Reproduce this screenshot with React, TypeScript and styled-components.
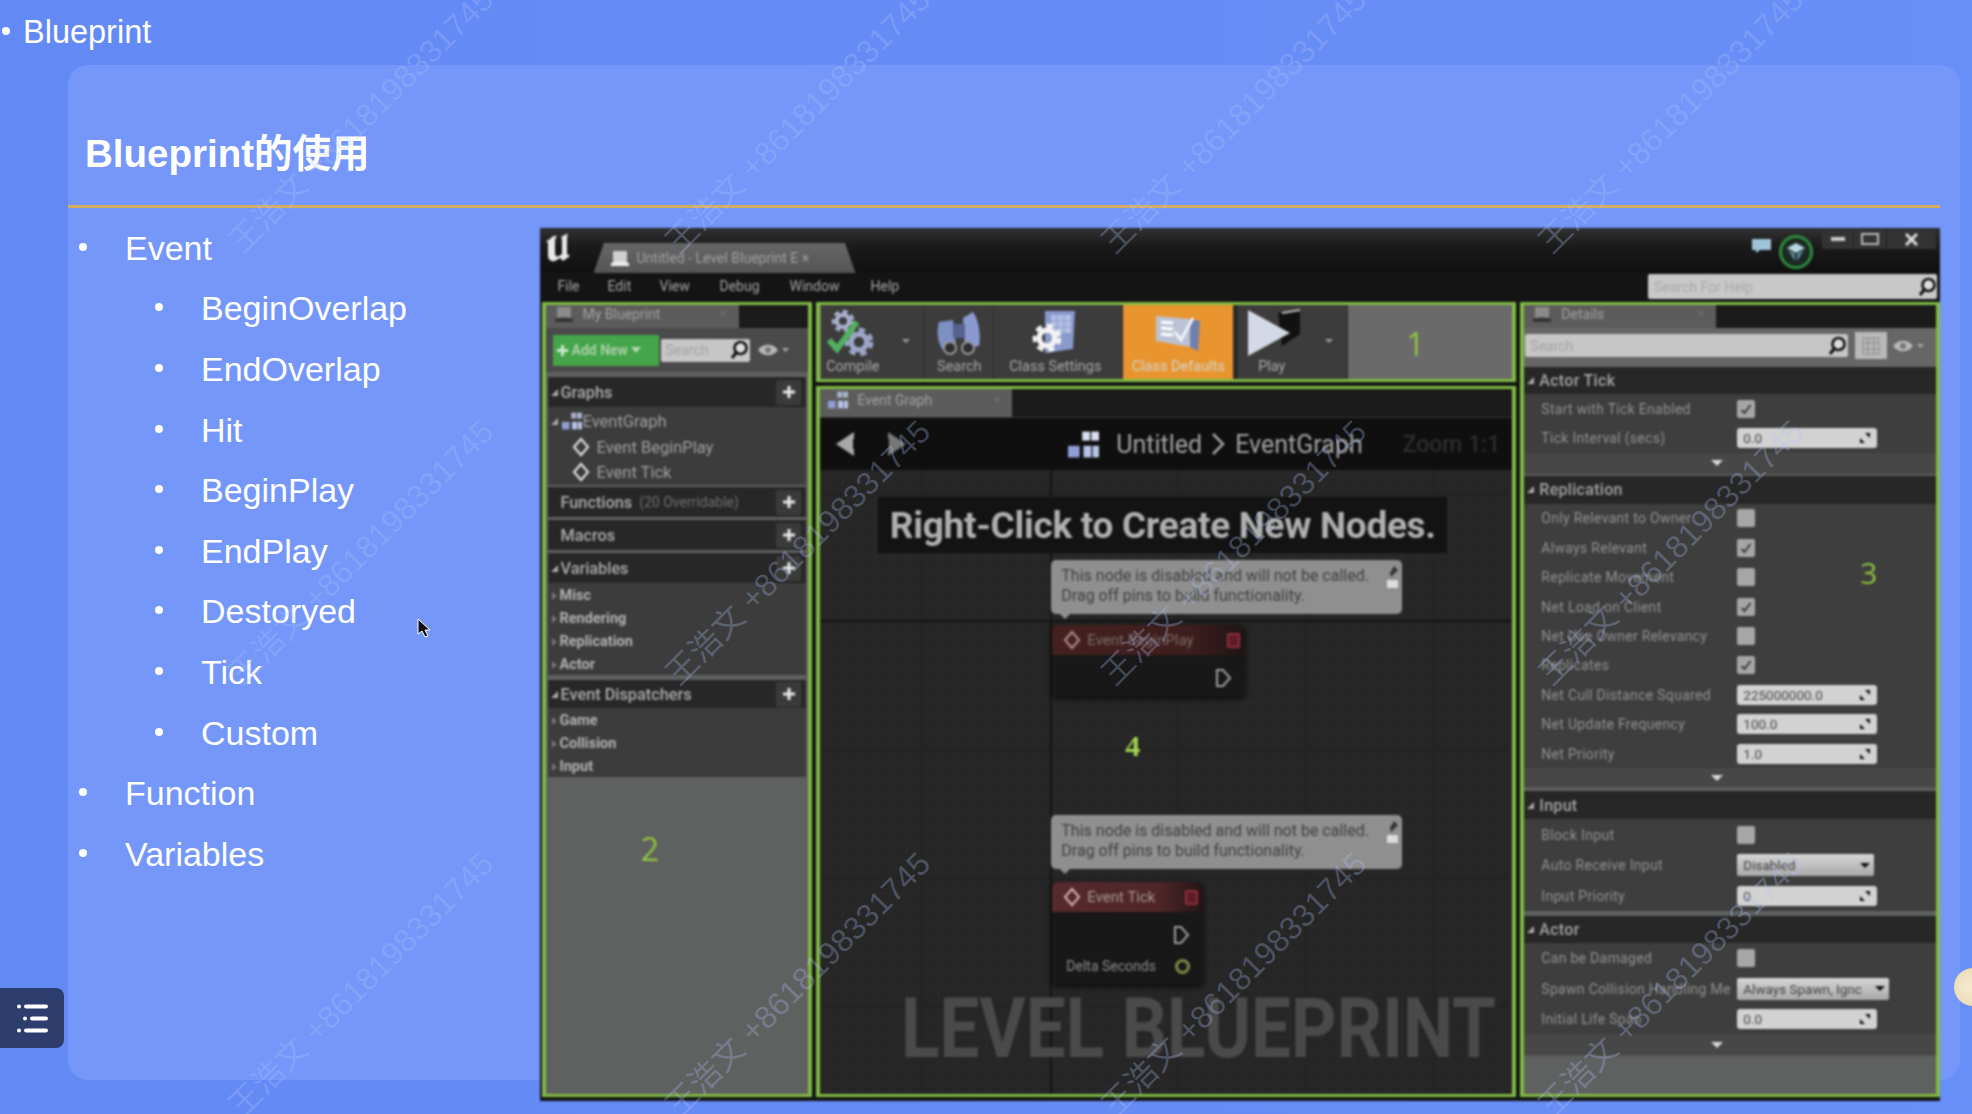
import React from "react";
import styled, { createGlobalStyle } from "styled-components";

const Global = createGlobalStyle`
  html, body { margin: 0; padding: 0; background: #668cf6; }
  * { box-sizing: border-box; }
`;

const SANS = `"Liberation Sans", "Noto Sans CJK SC", Arial, sans-serif`;
const UI = `Roboto, "Liberation Sans", sans-serif`;
const GREEN = "#80bb44";

const Page = styled.div`
  position: relative;
  width: 1972px;
  height: 1114px;
  overflow: hidden;
  background: linear-gradient(90deg, #6389f5 0%, #688ef7 100%);
  font-family: ${SANS};
  color: #fff;
`;
const TopBar = styled.div`
  height: 65px;
  display: flex;
  align-items: flex-start;
  padding: 13px 0 0 2px;
  font-size: 32.5px;
  line-height: 38px;
`;
const TopDot = styled.span`
  width: 8px;
  height: 8px;
  border-radius: 50%;
  background: #fff;
  margin: 14px 13px 0 0;
`;
const Slide = styled.section`
  margin-left: 68px;
  width: 1892px;
  height: 1015px;
  border-radius: 20px;
  background: #7497f9;
`;
const TitleRow = styled.h1`
  margin: 0 20px 0 0;
  height: 143px;
  border-bottom: 3px solid #d2ae63;
  padding: 67px 0 0 17px;
  font-size: 38.5px;
  line-height: 44px;
  font-weight: 700;
`;
const Content = styled.div`
  display: flex;
  align-items: flex-start;
`;
const Outline = styled.ul`
  list-style: none;
  margin: 0;
  padding: 10px 0 0;
  width: 471.5px;
`;
const Item = styled.li<{ $sub?: boolean }>`
  display: flex;
  align-items: center;
  height: 60.6px;
  padding-left: ${(p) => (p.$sub ? 87 : 11)}px;
  font-size: 34px;
`;
const Dot = styled.span`
  width: 8px;
  height: 8px;
  border-radius: 50%;
  background: #fff;
  margin: -3px 38px 0 0;
  flex: none;
`;

/* ---------- editor window ---------- */
const EditorWindow = styled.div`
  margin-top: 20px;
  width: 1400.5px;
  height: 873px;
  background: #141414;
  display: flex;
  flex-direction: column;
  font-family: ${UI};
  filter: blur(0.8px);
  border-top: 1px solid #222;
`;
const TitleBar = styled.div`
  height: 44px;
  flex: none;
  display: flex;
  align-items: flex-end;
  background: linear-gradient(180deg, #303030 0%, #1a1a1a 40%, #101010 100%);
  padding-left: 7px;
`;
const LogoMark = styled.svg`
  width: 28px;
  height: 30px;
  margin: 0 19px 10px 0;
  flex: none;
`;
const DocTab = styled.div`
  width: 262px;
  height: 30px;
  background: linear-gradient(180deg, #666 0%, #555 100%);
  clip-path: polygon(4% 0, 96% 0, 100% 100%, 0 100%);
  display: flex;
  align-items: center;
  padding-left: 16px;
  gap: 7px;
  color: #a0a0a0;
  font-size: 14px;
  white-space: nowrap;
`;
const TitleRight = styled.div`
  margin-left: auto;
  align-self: stretch;
  display: flex;
  align-items: flex-start;
  padding-right: 3px;
`;
const Ring = styled.div`
  width: 34px;
  height: 34px;
  margin: 6px 9px 0 6px;
  border-radius: 50%;
  border: 3px solid #2f8a3e;
  background: #1b2a22;
  display: flex;
  align-items: center;
  justify-content: center;
`;
const WinButtons = styled.div`
  display: flex;
  height: 20px;
  width: 115px;
  background: #333;
  border-radius: 0 0 2px 2px;
`;
const WinButton = styled.div<{ $w: number }>`
  width: ${(p) => p.$w}px;
  display: flex;
  align-items: center;
  justify-content: center;
  border-right: 1px solid #222;
`;
const MenuBar = styled.div`
  height: 29px;
  flex: none;
  display: flex;
  align-items: center;
  background: #141414;
  padding: 0 0 3px 18px;
  color: #a6a6a6;
  font-size: 14px;
`;
const MenuItem = styled.span<{ $w: number }>`
  width: ${(p) => p.$w}px;
`;
const HelpSearch = styled.div`
  margin-left: auto;
  margin-right: 3px;
  width: 289px;
  height: 25px;
  margin-top: 1px;
  background: #c8c8c8;
  color: #aaa;
  font-size: 14px;
  padding-left: 6px;
  display: flex;
  align-items: center;
  justify-content: space-between;
  border-radius: 2px;
`;
const Docks = styled.div`
  flex: 1;
  min-height: 0;
  display: flex;
  gap: 4px;
  padding: 0 0 4px 2px;
`;
const Dock = styled.div<{ $w: number; $grow?: boolean }>`
  width: ${(p) => p.$w}px;
  ${(p) => (p.$grow ? "flex: 1; min-height: 0;" : "")}
  border: solid ${GREEN};
  border-width: 3px 4px;
  background: #5f6060;
  display: flex;
  flex-direction: column;
  position: relative;
`;
const MiddleColumn = styled.div`
  width: 700px;
  display: flex;
  flex-direction: column;
  gap: 4px;
`;
const TabRow = styled.div<{ $h: number }>`
  height: ${(p) => p.$h}px;
  flex: none;
  background: #1b1b1b;
  display: flex;
`;
const PanelTab = styled.div<{ $w: number; $lift?: boolean }>`
  width: ${(p) => p.$w}px;
  background: #5c5c5c;
  color: #a2a2a2;
  font-size: 14px;
  display: flex;
  align-items: center;
  padding: 0 12px ${(p) => (p.$lift ? 6 : 2)}px 8px;
  gap: 9px;
`;
const TabClose = styled.span`
  margin-left: auto;
  color: #707070;
  font-size: 12px;
`;
const PanelToolbar = styled.div<{ $h: number; $bg: string; $lift?: number }>`
  height: ${(p) => p.$h}px;
  flex: none;
  background: ${(p) => p.$bg};
  display: flex;
  align-items: center;
  padding: 0 0 ${(p) => p.$lift ?? 0}px 1px;
`;
const AddNew = styled.div`
  width: 106px;
  height: 31px;
  margin-left: 6px;
  background: #45a54a;
  color: #a9cfa9;
  font-size: 14px;
  font-weight: 700;
  display: flex;
  align-items: center;
  padding-left: 3px;
  gap: 3px;
  white-space: nowrap;
`;
const SearchBox = styled.div<{ $w: number; $h: number; $ml: number }>`
  width: ${(p) => p.$w}px;
  height: ${(p) => p.$h}px;
  margin-left: ${(p) => p.$ml}px;
  background: #c6c6c6;
  color: #a3a3a3;
  font-size: 14px;
  display: flex;
  align-items: center;
  justify-content: space-between;
  padding: 0 1px 0 5px;
  border-radius: 2px;
`;
const GridToggle = styled.div`
  width: 32px;
  height: 27px;
  margin-left: 7px;
  background: #b9b9b9;
  display: flex;
  align-items: center;
  justify-content: center;
`;
const SectionBar = styled.div<{ $h: number; $mt?: number }>`
  height: ${(p) => p.$h}px;
  flex: none;
  margin: ${(p) => p.$mt ?? 0}px 2px 0;
  background: #272727;
  color: #adadad;
  font-size: 16.3px;
  font-weight: 500;
  display: flex;
  align-items: center;
  padding-left: 3px;
  white-space: nowrap;
`;
const Caret = styled.span<{ $open?: boolean }>`
  width: 0;
  height: 0;
  flex: none;
  margin-right: 3px;
  ${(p) =>
    p.$open
      ? `border-bottom: 7px solid #aaa; border-left: 7px solid transparent;`
      : `border-left: 5px solid #777; border-top: 4px solid transparent; border-bottom: 4px solid transparent;`}
`;
const BarIndent = styled.span`
  margin-left: 10px;
`;
const Muted = styled.span`
  color: #6f6f6f;
  font-size: 14px;
  font-weight: 400;
  margin-left: 7px;
`;
const PlusButton = styled.span`
  margin-left: auto;
  margin-right: 5px;
  width: 25px;
  height: 25px;
  background: #3a3a3a;
  border-radius: 2px;
  display: flex;
  align-items: center;
  justify-content: center;
`;
const TreeBody = styled.div<{ $h: number }>`
  height: ${(p) => p.$h}px;
  flex: none;
  margin: 0 2px;
  background: #3c3c3c;
  padding-top: 1px;
`;
const TreeRow = styled.div<{ $h: number; $pl: number; $gap: number }>`
  height: ${(p) => p.$h}px;
  padding-left: ${(p) => p.$pl}px;
  display: flex;
  align-items: center;
  gap: ${(p) => p.$gap}px;
  color: #a0a0a0;
  font-size: 16.5px;
  white-space: nowrap;
`;
const VarRow = styled.div`
  height: 23px;
  padding-left: 4px;
  display: flex;
  align-items: center;
  color: #b3b3b3;
  font-size: 14.5px;
  font-weight: 700;
`;
const DockNumber = styled.div<{ $pr: number; $pb: number; $pt?: number }>`
  flex: 1;
  align-self: stretch;
  display: flex;
  align-items: center;
  justify-content: center;
  padding: ${(p) => p.$pt ?? 0}px ${(p) => p.$pr}px ${(p) => p.$pb}px 0;
  color: #8ec63f;
  font-size: 32px;
  font-family: "Open Sans", sans-serif;
`;
const ToolButton = styled.div<{ $w: number; $on?: boolean; $pr?: number }>`
  width: ${(p) => p.$w}px;
  align-self: stretch;
  flex: none;
  background: ${(p) => (p.$on ? "#e8952f" : "#3c3c3c")};
  border-right: 1px solid #2c2c2c;
  display: flex;
  flex-direction: column;
  align-items: center;
  padding-right: ${(p) => p.$pr ?? 0}px;
  color: ${(p) => (p.$on ? "#d4d4cb" : "#a8a8a8")};
  font-size: 14.5px;
  line-height: 18px;
  position: relative;
`;
const ToolIcon = styled.svg`
  width: 60px;
  height: 50px;
  margin-top: 3px;
`;
const ToolCaret = styled.span`
  position: absolute;
  right: 14px;
  top: 34px;
  border-top: 4px solid #999;
  border-left: 4px solid transparent;
  border-right: 4px solid transparent;
`;
const ToolGap = styled.div`
  width: 4px;
  align-self: stretch;
  background: #2b2b2b;
  flex: none;
`;
const GraphBar = styled.div`
  height: 53px;
  flex: none;
  background: #0f0f0f;
  display: flex;
  align-items: center;
  color: #a3a3a3;
  font-size: 25px;
  padding-left: 14px;
  white-space: nowrap;
  border-top: 1px solid #333;
`;
const NavGap = styled.span<{ $w: number }>`
  width: ${(p) => p.$w}px;
  flex: none;
`;
const ZoomLabel = styled.span`
  margin-left: auto;
  margin-right: 12px;
  color: #2d2d2d;
  font-size: 23px;
  font-weight: 500;
`;
const Canvas = styled.div`
  flex: 1;
  position: relative;
  overflow: hidden;
  background-color: #262626;
  background-image:
    linear-gradient(90deg, #141414 2px, transparent 2px),
    linear-gradient(0deg, #141414 2px, transparent 2px),
    linear-gradient(90deg, #1f1f1f 1px, transparent 1px),
    linear-gradient(0deg, #1f1f1f 1px, transparent 1px),
    linear-gradient(90deg, #2c2c2c 1px, transparent 1px),
    linear-gradient(0deg, #2c2c2c 1px, transparent 1px);
  background-size: 2000px 2000px, 2000px 2000px, 128px 128px, 128px 128px, 16px 16px, 16px 16px;
  background-position: 230px 0, 0 152px, 102px 24px, 102px 24px, 6px 8px, 6px 8px;
`;
const Banner = styled.div`
  position: absolute;
  left: 58px;
  top: 27px;
  width: 569px;
  height: 56px;
  background: #131313;
  color: #b0b0b0;
  font-size: 37px;
  font-weight: 700;
  letter-spacing: -0.3px;
  display: flex;
  align-items: center;
  justify-content: center;
  white-space: nowrap;
`;
const Bubble = styled.div<{ $y: number }>`
  position: absolute;
  left: 231px;
  top: ${(p) => p.$y}px;
  width: 351px;
  height: 54px;
  background: #8f8f8f;
  border-radius: 5px;
  color: #404040;
  font-size: 16px;
  line-height: 20px;
  padding: 6px 0 0 10px;
  white-space: nowrap;
  &::after {
    content: "";
    position: absolute;
    left: 9px;
    bottom: -5px;
    border-top: 5px solid #8f8f8f;
    border-left: 5px solid transparent;
    border-right: 5px solid transparent;
  }
`;
const PinMark = styled.svg`
  position: absolute;
  right: 3px;
  top: 6px;
`;
const BpNode = styled.div<{ $y: number; $w: number; $h: number }>`
  position: absolute;
  left: 232px;
  top: ${(p) => p.$y}px;
  width: ${(p) => p.$w}px;
  height: ${(p) => p.$h}px;
  background: #181818;
  border-radius: 6px;
  box-shadow: 0 2px 6px #0a0a0a;
  color: #7f7f7f;
  font-size: 14px;
`;
const NodeHead = styled.div<{ $dim?: boolean }>`
  height: 30px;
  background: ${(p) =>
    p.$dim
      ? "linear-gradient(90deg, #452020 0%, #3f1e1e 70%, #1f1414 100%)"
      : "linear-gradient(90deg, #572a2d 0%, #502628 70%, #241515 100%)"};
  border-radius: 6px 6px 0 0;
  display: flex;
  align-items: center;
  padding-left: 11px;
  gap: 6px;
  font-size: 15px;
  color: ${(p) => (p.$dim ? "#7a6c6c" : "#a59696")};
  white-space: nowrap;
`;
const DelegatePin = styled.span`
  margin-left: auto;
  margin-right: 5px;
  width: 13px;
  height: 15px;
  background: #5c1c28;
  border: 2px solid #8f2f3a;
  border-radius: 2px;
`;
const ExecRow = styled.div<{ $pr: number }>`
  height: 46px;
  display: flex;
  align-items: center;
  justify-content: flex-end;
  padding-right: ${(p) => p.$pr}px;
`;
const DataRow = styled.div`
  display: flex;
  align-items: center;
  justify-content: space-between;
  padding: 0 13px 0 14px;
  color: #8c8c8c;
  font-size: 14px;
  white-space: nowrap;
`;
const DataPin = styled.span`
  width: 15px;
  height: 15px;
  border-radius: 50%;
  border: 3px solid #7f8a45;
`;
const CanvasNumber = styled.div`
  position: absolute;
  left: 305px;
  top: 259px;
  color: #a4d44f;
  font-family: "Liberation Serif", serif;
  font-weight: 700;
  font-size: 30px;
`;
const BigLabel = styled.div`
  position: absolute;
  left: 81px;
  top: 510px;
  color: #4a4a4a;
  font-size: 84px;
  line-height: 98px;
  font-weight: 700;
  white-space: nowrap;
  transform-origin: 0 50%;
  transform: scaleX(0.845);
`;
const DetailBar = styled.div<{ $mt?: number; $h?: number }>`
  height: ${(p) => p.$h ?? 27}px;
  flex: none;
  margin-top: ${(p) => p.$mt ?? 0}px;
  background: #272727;
  color: #a5a5a5;
  font-size: 16px;
  font-weight: 500;
  letter-spacing: 0.3px;
  display: flex;
  align-items: center;
  padding-left: 3px;
  gap: 2px;
`;
const DetailRow = styled.div<{ $h: number }>`
  height: ${(p) => p.$h}px;
  flex: none;
  background: #3e3e3e;
  display: flex;
  align-items: center;
  padding-left: 17px;
`;
const RowLabel = styled.div`
  width: 196px;
  flex: none;
  overflow: hidden;
  white-space: nowrap;
  color: #929292;
  font-size: 14px;
  letter-spacing: 0.3px;
`;
const Check = styled.div`
  width: 18px;
  height: 18px;
  background: #a6a6a6;
  border-radius: 2px;
  display: flex;
  align-items: center;
  justify-content: center;
`;
const NumField = styled.div`
  width: 140px;
  height: 20px;
  background: #d2d2d2;
  border-radius: 3px;
  color: #444;
  font-size: 13.5px;
  display: flex;
  align-items: center;
  justify-content: space-between;
  padding: 0 6px 0 6px;
`;
const Combo = styled.div<{ $w: number }>`
  width: ${(p) => p.$w}px;
  height: 22px;
  background: linear-gradient(180deg, #d6d6d6 0%, #a8a8a8 100%);
  border-radius: 2px;
  color: #3e3e3e;
  font-size: 13.5px;
  display: flex;
  align-items: center;
  justify-content: space-between;
  padding: 0 4px 0 6px;
  overflow: hidden;
  white-space: nowrap;
`;
const ComboArrow = styled.span`
  flex: none;
  border-top: 5px solid #111;
  border-left: 5px solid transparent;
  border-right: 5px solid transparent;
`;
const ExpandStrip = styled.div<{ $h: number }>`
  height: ${(p) => p.$h}px;
  flex: none;
  background: #474747;
  border-bottom: 2px solid #5a5a5a;
  display: flex;
  align-items: center;
  justify-content: center;
  &::after {
    content: "";
    margin-right: 26px;
    border-top: 6px solid #d8d8d8;
    border-left: 6px solid transparent;
    border-right: 6px solid transparent;
  }
`;
const DetailsNumber = styled.div`
  position: absolute;
  left: 336px;
  top: 247px;
  color: #8ec63f;
  font-size: 30px;
  font-family: "Open Sans", sans-serif;
`;

/* ---------- overlays ---------- */
const WatermarkLayer = styled.div`
  position: absolute;
  left: 247px;
  top: -172px;
  display: grid;
  grid-template-columns: repeat(4, 436.5px);
  grid-auto-rows: 432px;
  pointer-events: none;
`;
const Mark = styled.div`
  align-self: end;
  height: 36px;
  line-height: 36px;
  width: 20px;
  white-space: nowrap;
  transform-origin: 0 100%;
  transform: rotate(-45deg);
  font-size: 32px;
  letter-spacing: 0.2px;
  color: rgba(178, 196, 250, 0.28);
  font-family: ${SANS};
`;
const FabButton = styled.div`
  position: absolute;
  left: 0;
  top: 988px;
  width: 64px;
  height: 60px;
  background: #2d3e6e;
  border-radius: 0 8px 8px 0;
  display: flex;
  align-items: center;
  justify-content: center;
`;
const EdgeBall = styled.div`
  position: absolute;
  left: 1954px;
  top: 968px;
  width: 38px;
  height: 38px;
  border-radius: 50%;
  background: radial-gradient(circle at 40% 50%, #f6ead0, #e6d5a8);
`;
const Pointer = styled.svg`
  position: absolute;
  left: 416px;
  top: 618px;
`;

/* ---------- drawings ---------- */
const Gear = ({ x, y, r, c }: { x: number; y: number; r: number; c: string }) => (
  <g transform={`translate(${x} ${y})`}>
    <circle r={r * 0.88} fill="none" stroke={c} strokeWidth={r * 0.3} strokeDasharray={`${r * 0.45} ${r * 0.37}`} />
    <circle r={r * 0.56} fill="none" stroke={c} strokeWidth={r * 0.38} />
  </g>
);
const Lens = () => (
  <svg width="20" height="20" viewBox="0 0 20 20">
    <circle cx="11.5" cy="8" r="6" fill="#ddd" stroke="#111" strokeWidth="2.6" />
    <path d="M7 13l-4 5" stroke="#111" strokeWidth="3" />
  </svg>
);
const GraphIcon = ({ s, dim }: { s: number; dim?: boolean }) => (
  <svg width={s} height={s} viewBox="0 0 24 24">
    <rect x="11" y="2" width="6" height="7" fill={dim ? "#a9b3cc" : "#d9def0"} />
    <rect x="18" y="2" width="6" height="7" fill={dim ? "#a9b3cc" : "#d9def0"} />
    <rect x="0" y="13" width="9" height="9" fill="#8f9fd6" />
    <rect x="12" y="13" width="6" height="9" fill="#b9c4e8" />
    <rect x="19" y="13" width="5" height="9" fill="#b9c4e8" />
  </svg>
);
const BookIcon = ({ dim }: { dim?: boolean }) => (
  <svg width="20" height="18" viewBox="0 0 20 18">
    <path d="M3 2h14v11H3z" fill={dim ? "#8a8a8a" : "#cfcfcf"} />
    <path d="M1 14c5-2 13-2 18 0v3H1z" fill={dim ? "#333" : "#eee"} />
  </svg>
);
const Eye = () => (
  <svg width="32" height="14" viewBox="0 0 32 14">
    <path d="M1 7c5-7 15-7 20 0-5 7-15 7-20 0z" fill="#b9b9b9" />
    <circle cx="11" cy="7" r="3" fill="#777" />
    <path d="M25 5h7l-3.500 4z" fill="#aaa" />
  </svg>
);
const Plus = () => (
  <svg width="14" height="14" viewBox="0 0 14 14">
    <path d="M7 1v12M1 7h12" stroke="#e8e8e8" strokeWidth="3" />
  </svg>
);
const Diamond = ({ c = "#ddd" }: { c?: string }) => (
  <svg width="18" height="20" viewBox="0 0 18 20">
    <path d="M9 2l7 8-7 8-7-8z" fill="none" stroke={c} strokeWidth="2.2" />
  </svg>
);
const ExecPin = () => (
  <svg width="17" height="20" viewBox="0 0 17 20">
    <path d="M2 2h6l7 8-7 8H2z" fill="none" stroke="#9c9c9c" strokeWidth="2" />
  </svg>
);
const Tick = () => (
  <svg width="12" height="12" viewBox="0 0 12 12">
    <path d="M1.500 7l3 3 6-8" fill="none" stroke="#3a3a3a" strokeWidth="2" />
  </svg>
);
const Spin = () => (
  <svg width="12" height="12" viewBox="0 0 12 12">
    <path d="M6 1h5v5zM6 11H1V6z" fill="#111" />
  </svg>
);

const CheckBox = ({ on }: { on?: boolean }) => <Check>{on && <Tick />}</Check>;

type Row = { l: string; k: "c" | "C" | "n" | "d"; v?: string; w?: number };
const DetailRows = ({ rows, h }: { rows: Row[]; h: number }) => (
  <>
    {rows.map((r) => (
      <DetailRow key={r.l} $h={h}>
        <RowLabel>{r.l}</RowLabel>
        {r.k === "C" && <CheckBox on />}
        {r.k === "c" && <CheckBox />}
        {r.k === "n" && (
          <NumField>
            {r.v}
            <Spin />
          </NumField>
        )}
        {r.k === "d" && (
          <Combo $w={r.w ?? 137}>
            {r.v}
            <ComboArrow />
          </Combo>
        )}
      </DetailRow>
    ))}
  </>
);

const topics = ["BeginOverlap", "EndOverlap", "Hit", "BeginPlay", "EndPlay", "Destoryed", "Tick", "Custom"];
const marks = Array.from({ length: 12 }, (_, i) => i);

export default function App() {
  return (
    <Page>
      <Global />
      <TopBar>
        <TopDot />
        Blueprint
      </TopBar>
      <Slide>
        <TitleRow>Blueprint的使用</TitleRow>
        <Content>
          <Outline>
            <Item>
              <Dot />
              Event
            </Item>
            {topics.map((t) => (
              <Item key={t} $sub>
                <Dot />
                {t}
              </Item>
            ))}
            <Item>
              <Dot />
              Function
            </Item>
            <Item>
              <Dot />
              Variables
            </Item>
          </Outline>

          <EditorWindow>
            <TitleBar>
              <LogoMark viewBox="0 0 28 30">
                <path
                  d="M2 7c3-4 6-5 8-4-2 2-2 4-2 8v9c0 3 2 4 4 3l3-2V9c0-3 0-4-1-5 3-2 5-3 7-3-1 2-1 4-1 7v13l3 2-7 5-3-3-5 3c-4 1-7-1-7-6V11c0-2-1-3-4-4z"
                  fill="#e8e8e8"
                />
              </LogoMark>
              <DocTab>
                <BookIcon />
                Untitled - Level Blueprint E ×
              </DocTab>
              <TitleRight>
                <svg width="22" height="24" viewBox="0 0 22 24">
                  <path d="M1 10h19v11H9l-4 3v-3H1z" fill="#9fc3d8" />
                </svg>
                <Ring>
                  <svg width="20" height="20" viewBox="0 0 20 20">
                    <path d="M10 1l9 5-9 5-9-5z" fill="#b8d6e4" />
                    <path d="M2 8l7 4v7zM18 8l-7 4v7z" fill="#5f8aa0" />
                  </svg>
                </Ring>
                <WinButtons>
                  <WinButton $w={32}>
                    <svg width="14" height="4"><rect width="14" height="4" fill="#ccc" /></svg>
                  </WinButton>
                  <WinButton $w={33}>
                    <svg width="18" height="12"><rect x="1" y="1" width="16" height="10" fill="none" stroke="#bbb" strokeWidth="2" /></svg>
                  </WinButton>
                  <WinButton $w={50}>
                    <svg width="13" height="13" viewBox="0 0 13 13"><path d="M1 1l11 11M12 1L1 12" stroke="#ddd" strokeWidth="3" /></svg>
                  </WinButton>
                </WinButtons>
              </TitleRight>
            </TitleBar>
            <MenuBar>
              <MenuItem $w={50}>File</MenuItem>
              <MenuItem $w={52}>Edit</MenuItem>
              <MenuItem $w={60}>View</MenuItem>
              <MenuItem $w={70}>Debug</MenuItem>
              <MenuItem $w={81}>Window</MenuItem>
              <MenuItem $w={40}>Help</MenuItem>
              <HelpSearch>
                Search For Help
                <Lens />
              </HelpSearch>
            </MenuBar>

            <Docks>
              <Dock $w={271}>
                <TabRow $h={23}>
                  <PanelTab $w={193} $lift>
                    <BookIcon dim />
                    My Blueprint
                    <TabClose>×</TabClose>
                  </PanelTab>
                </TabRow>
                <PanelToolbar $h={44} $bg="#4a4a4a">
                  <AddNew>
                    <svg width="13" height="13" viewBox="0 0 14 14"><path d="M7 1v12M1 7h12" stroke="#cfe9cf" strokeWidth="3" /></svg>
                    Add New
                    <svg width="10" height="8" viewBox="0 0 10 8"><path d="M0 1h10L5 7z" fill="#b7d8b7" /></svg>
                  </AddNew>
                  <SearchBox $w={89} $h={23} $ml={2}>
                    Search
                    <Lens />
                  </SearchBox>
                  <NavGap $w={7} />
                  <Eye />
                </PanelToolbar>
                <SectionBar $h={30} $mt={5}>
                  <Caret $open />
                  Graphs
                  <PlusButton><Plus /></PlusButton>
                </SectionBar>
                <TreeBody $h={78}>
                  <TreeRow $h={26} $pl={3} $gap={1}>
                    <Caret $open />
                    <GraphIcon s={20} dim />
                    EventGraph
                  </TreeRow>
                  <TreeRow $h={26} $pl={24} $gap={7}><Diamond />Event BeginPlay</TreeRow>
                  <TreeRow $h={24} $pl={24} $gap={7}><Diamond />Event Tick</TreeRow>
                </TreeBody>
                <SectionBar $h={30} $mt={2}>
                  <BarIndent>Functions</BarIndent>
                  <Muted>(20 Overridable)</Muted>
                  <PlusButton><Plus /></PlusButton>
                </SectionBar>
                <SectionBar $h={30} $mt={3}>
                  <BarIndent>Macros</BarIndent>
                  <PlusButton><Plus /></PlusButton>
                </SectionBar>
                <SectionBar $h={30} $mt={3}>
                  <Caret $open />
                  Variables
                  <PlusButton><Plus /></PlusButton>
                </SectionBar>
                <TreeBody $h={92}>
                  {["Misc", "Rendering", "Replication", "Actor"].map((t) => (
                    <VarRow key={t}><Caret />{t}</VarRow>
                  ))}
                </TreeBody>
                <SectionBar $h={28} $mt={5}>
                  <Caret $open />
                  Event Dispatchers
                  <PlusButton><Plus /></PlusButton>
                </SectionBar>
                <TreeBody $h={69}>
                  {["Game", "Collision", "Input"].map((t) => (
                    <VarRow key={t}><Caret />{t}</VarRow>
                  ))}
                </TreeBody>
                <DockNumber $pr={54} $pb={174}>2</DockNumber>
              </Dock>

              <MiddleColumn>
                <Dock $w={700}>
                  <PanelToolbar $h={74} $bg="#6a6a6a">
                    <ToolButton $w={104} $pr={40}>
                      <ToolIcon viewBox="0 0 60 50">
                        <Gear x={20} y={13} r={11} c="#aab1cc" />
                        <Gear x={36} y={34} r={14} c="#9ea6c8" />
                        <path d="M6 32l8 9L34 14" fill="none" stroke="#52b060" strokeWidth="6" />
                      </ToolIcon>
                      Compile
                      <ToolCaret />
                    </ToolButton>
                    <ToolButton $w={69}>
                      <ToolIcon viewBox="0 0 60 50">
                        <path d="M10 14l14-2 3 24-13 6c-5-6-7-18-4-28z" fill="#7e8fc4" />
                        <path d="M34 10l10-6c6 8 8 24 6 34l-14 2z" fill="#8a9ad0" />
                        <rect x="24" y="16" width="12" height="14" fill="#56628e" />
                        <circle cx="21" cy="40" r="6" fill="#2e2e2e" stroke="#999" strokeWidth="2" />
                        <circle cx="39" cy="40" r="6" fill="#2e2e2e" stroke="#999" strokeWidth="2" />
                      </ToolIcon>
                      Search
                    </ToolButton>
                    <ToolButton $w={129} $pr={6}>
                      <ToolIcon viewBox="0 0 60 50">
                        <path d="M20 3h30l-2 38-28 4z" fill="#8899cc" />
                        <path d="M26 7h20v18H26z" fill="#b4c0e4" />
                        <path d="M32 7v18M39 7v18M26 13h20M26 19h20" stroke="#8899cc" />
                        <Gear x={22} y={30} r={14} c="#f4f4f4" />
                      </ToolIcon>
                      Class Settings
                    </ToolButton>
                    <ToolButton $w={111} $on>
                      <ToolIcon viewBox="0 0 60 50">
                        <path d="M8 8l34 3v28L8 33z" fill="#bcc2d4" />
                        <path d="M42 11l10 2-2 30-8-4z" fill="#6f7fae" />
                        <path d="M13 14l12 1M13 20l12 1M13 26l12 1" stroke="#fff" strokeWidth="3" />
                        <path d="M27 24l6 8 12-22" fill="none" stroke="#f2f4fa" strokeWidth="3" />
                      </ToolIcon>
                      Class Defaults
                    </ToolButton>
                    <ToolGap />
                    <ToolButton $w={110} $pr={42}>
                      <ToolIcon viewBox="0 0 60 50">
                        <path d="M36 5l22-3v24L40 38z" fill="#111" />
                        <path d="M40 5l18-3" stroke="#bbb" strokeWidth="2" />
                        <path d="M6 2l42 23L6 48z" fill="#d3d9e6" />
                      </ToolIcon>
                      Play
                      <ToolCaret />
                    </ToolButton>
                    <DockNumber $pr={30} $pb={0} $pt={3}>1</DockNumber>
                  </PanelToolbar>
                </Dock>

                <Dock $w={700} $grow>
                  <TabRow $h={28}>
                    <PanelTab $w={192} $lift>
                      <GraphIcon s={20} dim />
                      Event Graph
                      <TabClose>×</TabClose>
                    </PanelTab>
                  </TabRow>
                  <GraphBar>
                    <svg width="22" height="28" viewBox="0 0 22 28"><path d="M20 2v7h-1v10h1v7L2 14z" fill="#a8a8a8" /></svg>
                    <NavGap $w={30} />
                    <svg width="22" height="28" viewBox="0 0 22 28"><path d="M2 2v7h1v10H2v7l18-12z" fill="#777" /></svg>
                    <NavGap $w={160} />
                    <GraphIcon s={31} />
                    <NavGap $w={17} />
                    Untitled
                    <NavGap $w={8} />
                    <svg width="16" height="24" viewBox="0 0 16 24"><path d="M3 2l10 10L3 22" fill="none" stroke="#a3a3a3" strokeWidth="2.5" /></svg>
                    <NavGap $w={9} />
                    EventGraph
                    <ZoomLabel>Zoom 1:1</ZoomLabel>
                  </GraphBar>
                  <Canvas>
                    <Banner>Right-Click to Create New Nodes.</Banner>
                    <Bubble $y={90}>
                      This node is disabled and will not be called.
                      <br />
                      Drag off pins to build functionality.
                      <PinMark width="12" height="26" viewBox="0 0 12 26">
                        <path d="M7 0l4 4-4 4-3 3-1-4z" fill="#333" />
                        <rect x="0" y="14" width="11" height="8" fill="#ddd" />
                      </PinMark>
                    </Bubble>
                    <BpNode $y={155} $w={193} $h={72}>
                      <NodeHead $dim>
                        <Diamond c="#a88" />
                        Event BeginPlay
                        <DelegatePin />
                      </NodeHead>
                      <ExecRow $pr={13}><ExecPin /></ExecRow>
                    </BpNode>
                    <CanvasNumber>4</CanvasNumber>
                    <Bubble $y={345}>
                      This node is disabled and will not be called.
                      <br />
                      Drag off pins to build functionality.
                      <PinMark width="12" height="26" viewBox="0 0 12 26">
                        <path d="M7 0l4 4-4 4-3 3-1-4z" fill="#333" />
                        <rect x="0" y="14" width="11" height="8" fill="#ddd" />
                      </PinMark>
                    </Bubble>
                    <BpNode $y={412} $w={151} $h={103}>
                      <NodeHead>
                        <Diamond c="#caa" />
                        Event Tick
                        <DelegatePin />
                      </NodeHead>
                      <ExecRow $pr={13}><ExecPin /></ExecRow>
                      <DataRow>
                        Delta Seconds
                        <DataPin />
                      </DataRow>
                    </BpNode>
                    <BigLabel>LEVEL BLUEPRINT</BigLabel>
                  </Canvas>
                </Dock>
              </MiddleColumn>

              <Dock $w={420}>
                <TabRow $h={23}>
                  <PanelTab $w={192} $lift>
                    <BookIcon dim />
                    Details
                    <TabClose>×</TabClose>
                  </PanelTab>
                </TabRow>
                <PanelToolbar $h={39} $bg="#666" $lift={4}>
                  <SearchBox $w={323} $h={23} $ml={0}>
                    Search
                    <Lens />
                  </SearchBox>
                  <GridToggle>
                    <svg width="18" height="18" viewBox="0 0 18 18">
                      <path d="M1 1h16v16H1zM1 6h16M1 12h16M6 1v16M12 1v16" fill="none" stroke="#888" />
                    </svg>
                  </GridToggle>
                  <NavGap $w={5} />
                  <Eye />
                </PanelToolbar>
                <DetailBar><Caret $open />Actor Tick</DetailBar>
                <DetailRows
                  h={29.4}
                  rows={[
                    { l: "Start with Tick Enabled", k: "C" },
                    { l: "Tick Interval (secs)", k: "n", v: "0.0" },
                  ]}
                />
                <ExpandStrip $h={23} />
                <DetailBar $h={28}><Caret $open />Replication</DetailBar>
                <DetailRows
                  h={29.4}
                  rows={[
                    { l: "Only Relevant to Owner", k: "c" },
                    { l: "Always Relevant", k: "C" },
                    { l: "Replicate Movement", k: "c" },
                    { l: "Net Load on Client", k: "C" },
                    { l: "Net Use Owner Relevancy", k: "c" },
                    { l: "Replicates", k: "C" },
                    { l: "Net Cull Distance Squared", k: "n", v: "225000000.0" },
                    { l: "Net Update Frequency", k: "n", v: "100.0" },
                    { l: "Net Priority", k: "n", v: "1.0" },
                  ]}
                />
                <ExpandStrip $h={21} />
                <DetailBar $mt={2} $h={28}><Caret $open />Input</DetailBar>
                <DetailRows
                  h={30.5}
                  rows={[
                    { l: "Block Input", k: "c" },
                    { l: "Auto Receive Input", k: "d", v: "Disabled" },
                    { l: "Input Priority", k: "n", v: "0" },
                  ]}
                />
                <DetailBar $mt={5}><Caret $open />Actor</DetailBar>
                <DetailRows
                  h={30.5}
                  rows={[
                    { l: "Can be Damaged", k: "c" },
                    { l: "Spawn Collision Handling Me", k: "d", v: "Always Spawn, Ignc", w: 152 },
                    { l: "Initial Life Span", k: "n", v: "0.0" },
                  ]}
                />
                <ExpandStrip $h={23} />
                <DetailsNumber>3</DetailsNumber>
              </Dock>
            </Docks>
          </EditorWindow>
        </Content>
      </Slide>

      <Pointer width="16" height="22" viewBox="0 0 16 22">
        <path d="M2 1v15l4-3 3 6 3-1-3-6h5z" fill="#111" stroke="#fff" />
      </Pointer>
      <FabButton>
        <svg width="34" height="30" viewBox="0 0 34 30">
          <circle cx="4" cy="3.500" r="2" fill="#fff" />
          <rect x="9" y="1.500" width="24" height="4" rx="2" fill="#fff" />
          <circle cx="10" cy="15.500" r="2" fill="#fff" />
          <rect x="15" y="13.500" width="18" height="4" rx="2" fill="#fff" />
          <circle cx="4" cy="27.500" r="2" fill="#fff" />
          <rect x="9" y="25.500" width="24" height="4" rx="2" fill="#fff" />
        </svg>
      </FabButton>
      <EdgeBall />
      <WatermarkLayer>
        {marks.map((i) => (
          <Mark key={i}>王浩文 +8618198331745</Mark>
        ))}
      </WatermarkLayer>
    </Page>
  );
}
